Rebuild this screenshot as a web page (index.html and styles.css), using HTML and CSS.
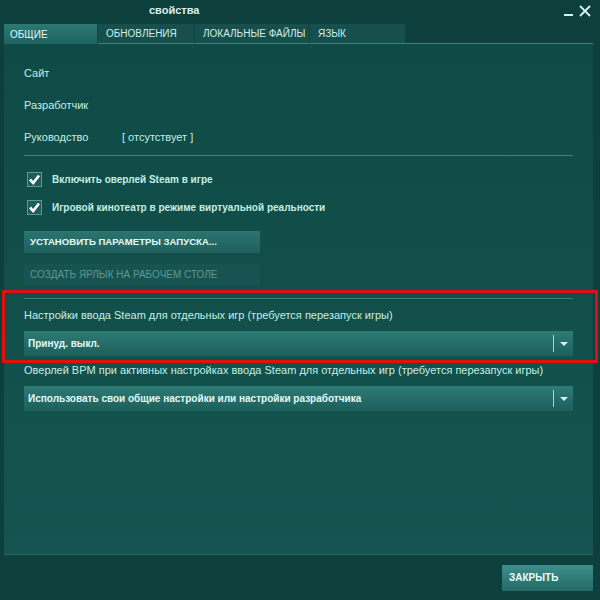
FILE: index.html
```html
<!DOCTYPE html>
<html lang="ru">
<head>
<meta charset="utf-8">
<link rel="stylesheet" href="styles.css">
</head>
<body>
<div class="window">
  <div class="titlebar">
    <div class="title">свойства</div>
    <div class="controls">
      <svg class="ctl" width="10" height="12" viewBox="0 0 10 12"><rect x="0" y="9" width="9" height="2" fill="#d8f2ee"/></svg>
      <svg class="ctl" width="12" height="12" viewBox="0 0 12 12"><path d="M1 1 L11 11 M11 1 L1 11" stroke="#d8f2ee" stroke-width="1.8"/></svg>
    </div>
  </div>
  <div class="tabs">
    <div class="tab active">ОБЩИЕ</div>
    <div class="tab">ОБНОВЛЕНИЯ</div>
    <div class="tab">ЛОКАЛЬНЫЕ ФАЙЛЫ</div>
    <div class="tab">ЯЗЫК</div>
    <div class="tabfill"></div>
  </div>
  <div class="panel">
    <div class="row">Сайт</div>
    <div class="row">Разработчик</div>
    <div class="row"><span class="key">Руководство</span><span>[ отсутствует ]</span></div>
    <div class="sep first"></div>
    <div class="check"><span class="box"><svg width="13" height="13" viewBox="0 0 13 13"><path d="M2 6.5 L5.2 10 L11 2.5" fill="none" stroke="#ffffff" stroke-width="2.6"/></svg></span>Включить оверлей Steam в игре</div>
    <div class="check"><span class="box"><svg width="13" height="13" viewBox="0 0 13 13"><path d="M2 6.5 L5.2 10 L11 2.5" fill="none" stroke="#ffffff" stroke-width="2.6"/></svg></span>Игровой кинотеатр в режиме виртуальной реальности</div>
    <div class="btn launch">УСТАНОВИТЬ ПАРАМЕТРЫ ЗАПУСКА...</div>
    <div class="btn disabled">СОЗДАТЬ ЯРЛЫК НА РАБОЧЕМ СТОЛЕ</div>
    <div class="sep second"></div>
    <div class="label l1">Настройки ввода Steam для отдельных игр (требуется перезапуск игры)</div>
    <div class="select"><span class="val">Принуд. выкл.</span><span class="bar"></span><span class="arrow"></span></div>
    <div class="label l2">Оверлей BPM при активных настройках ввода Steam для отдельных игр (требуется перезапуск игры)</div>
    <div class="select"><span class="val">Использовать свои общие настройки или настройки разработчика</span><span class="bar"></span><span class="arrow"></span></div>
  </div>
  <div class="footer">
    <div class="close">ЗАКРЫТЬ</div>
  </div>
</div>
<div class="highlight"></div>
</body>
</html>
```
FILE: styles.css
```css
html, body {
  margin: 0;
  padding: 0;
  width: 600px;
  height: 600px;
  overflow: hidden;
  background: #0d3f3d;
  font-family: "Liberation Sans", Arial, sans-serif;
  color: #c4efe4;
}
.window {
  display: flex;
  flex-direction: column;
  width: 600px;
  height: 600px;
}
.titlebar {
  height: 24px;
  display: flex;
  align-items: center;
}
.title {
  margin-left: 149px;
  font-size: 11px;
  font-weight: bold;
  color: #d6f4ef;
  margin-top: -4px;
}
.controls {
  margin-left: auto;
  margin-right: 9px;
  display: flex;
  align-items: center;
  gap: 5px;
  margin-top: -2px;
}
.ctl { display: block; }
.tabs {
  display: flex;
  height: 20px;
  margin-left: 4px;
  margin-right: 7px;
}
.tab {
  font-size: 10px;
  color: #cfeee8;
  background: #174f4c;
  display: flex;
  align-items: center;
  padding-left: 8px;
  border-right: 1px solid #0f4542;
  box-sizing: border-box;
  border-bottom: 1px solid #3b8580;
}
.tab.active {
  background: linear-gradient(#2e7874, #1e6460);
  color: #e3fbf6;
  border-bottom: none;
  width: 94px;
  padding-left: 6px;
}
.tab:nth-child(2) { width: 97px; }
.tab:nth-child(3) { width: 115px; }
.tab:nth-child(4) { width: 96px; }
.tabfill {
  flex: 1;
  border-bottom: 1px solid #3b8580;
}
.panel {
  margin-left: 4px;
  margin-right: 7px;
  height: 511px;
  padding: 13px 20px 0 20px;
  box-sizing: border-box;
  background: linear-gradient(#0f4a46, #155450);
  border-bottom: 1px solid #276560;
  display: flex;
  flex-direction: column;
  font-size: 11px;
}
.row {
  height: 32px;
  line-height: 32px;
  display: flex;
}
.key { width: 98px; }
.sep {
  height: 1px;
  background: #3a7f7a;
}
.sep.first { margin-top: 2px; }
.check {
  height: 28px;
  display: flex;
  align-items: center;
  font-weight: bold;
  font-size: 10px;
}
.sep.first + .check { margin-top: 9px; }
.box {
  width: 13px;
  height: 13px;
  border: 1px solid #5a9a95;
  background: #1d5d59;
  margin-left: 3px;
  margin-right: 10px;
  display: flex;
}
.btn {
  width: 236px;
  height: 22px;
  line-height: 22px;
  font-size: 10px;
  padding-left: 6px;
  box-sizing: border-box;
}
.btn.launch {
  margin-top: 10px;
  background: linear-gradient(#2c7470, #1f605c);
  color: #e6fbf7;
  font-weight: bold;
  font-size: 9.6px;
}
.btn.disabled {
  margin-top: 11px;
  background: #175350;
  color: #5d9a94;
}
.sep.second { margin-top: 12px; }
.label {
  height: 18px;
  line-height: 18px;
  font-size: 11px;
}
.label.l1 { margin-top: 7px; }
.label.l2 { margin-top: 5px; }
.select {
  margin-top: 7px;
  height: 25px;
  background: linear-gradient(#2e7b76, #1c5f5b);
  display: flex;
  align-items: center;
  font-weight: bold;
  font-size: 10px;
  color: #e2fbf6;
}
.val {
  flex: 1;
  padding-left: 4px;
}
.bar {
  width: 1px;
  height: 17px;
  background: #a6d8d2;
}
.arrow {
  width: 19px;
  height: 100%;
  display: flex;
  align-items: center;
  justify-content: center;
}
.arrow::before {
  content: "";
  border-left: 4px solid transparent;
  border-right: 4px solid transparent;
  border-top: 4px solid #d4f2ee;
}
.footer {
  flex: 1;
  display: flex;
  justify-content: flex-end;
  padding-top: 10px;
  padding-right: 7px;
}
.close {
  width: 91px;
  height: 26px;
  line-height: 26px;
  box-sizing: border-box;
  padding-left: 7px;
  background: linear-gradient(#3d8e8a, #246a66);
  color: #e8fdf9;
  font-weight: bold;
  font-size: 10px;
}
.highlight {
  position: absolute;
  left: 2px;
  top: 290px;
  width: 590px;
  height: 67px;
  border: 3px solid #e01010;
}
```
